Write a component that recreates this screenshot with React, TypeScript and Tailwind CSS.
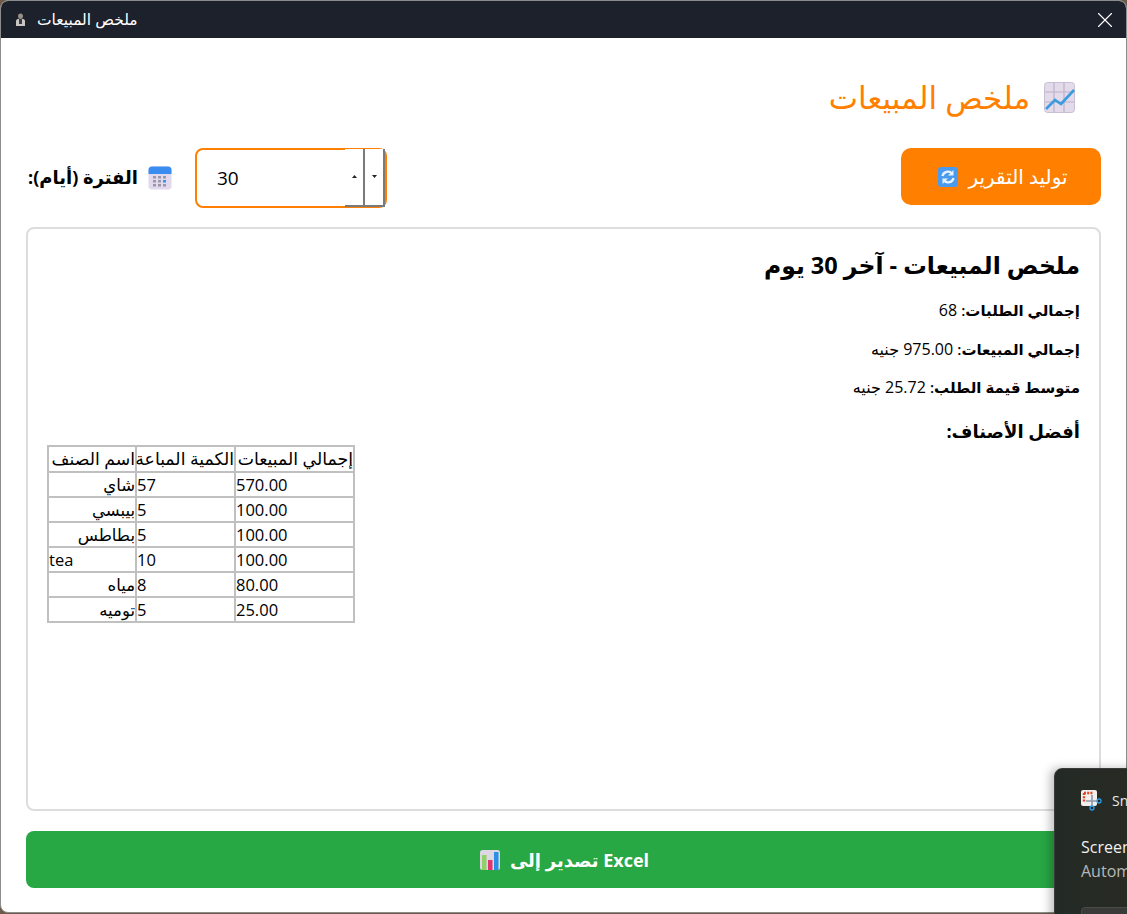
import { X } from "lucide-react";

const rows = [
  ["شاي", "57", "570.00"],
  ["بيبسي", "5", "100.00"],
  ["بطاطس", "5", "100.00"],
  ["tea", "10", "100.00"],
  ["مياه", "8", "80.00"],
  ["توميه", "5", "25.00"],
];

function ChartEmoji() {
  return (
    <svg width="31" height="31" viewBox="0 0 31 31" aria-hidden>
      <rect x="0.5" y="0.5" width="30" height="30" rx="3" fill="#e3dbe9" stroke="#c9bfd4" />
      <path d="M10 1v29M20 1v29M1 10h29M1 20h29" stroke="#bdb1c9" strokeWidth="1.2" />
      <path d="M2 27l9-9 6 4 13-14" fill="none" stroke="#3b9be0" strokeWidth="2.6" />
    </svg>
  );
}

function CalendarEmoji() {
  return (
    <svg width="24" height="24" viewBox="0 0 24 24" aria-hidden>
      <rect x="0.5" y="0.5" width="23" height="23" rx="3.5" fill="#e2d9ee" />
      <path d="M0.5 8V4A3.5 3.5 0 0 1 4 .5h16A3.5 3.5 0 0 1 23.500 4v4z" fill="#3b8cf0" />
      <g fill="#9a98a8">
        <rect x="5" y="10" width="3" height="2.500" />
        <rect x="10" y="10" width="3" height="2.500" />
        <rect x="15" y="10" width="3" height="2.500" />
        <rect x="5" y="14" width="3" height="2.500" />
        <rect x="10" y="14" width="3" height="2.500" />
        <rect x="5" y="18" width="3" height="2.500" />
        <rect x="10" y="18" width="3" height="2.500" />
        <rect x="15" y="18" width="3" height="2.500" />
      </g>
      <rect x="15" y="14" width="3" height="2.500" fill="#2f95ee" />
    </svg>
  );
}

function RefreshEmoji() {
  return (
    <svg width="20" height="20" viewBox="0 0 20 20" aria-hidden>
      <rect width="20" height="20" rx="3" fill="#4a9bee" />
      <path d="M4.500 9a5.500 5.500 0 0 1 9.500-2.500" fill="none" stroke="#e8f2fc" strokeWidth="2.400" />
      <path d="M15.500 3v5.500h-5.500z" fill="#e8f2fc" />
      <path d="M15.500 11a5.500 5.500 0 0 1-9.500 2.500" fill="none" stroke="#e8f2fc" strokeWidth="2.400" />
      <path d="M4.500 17v-5.500h5.500z" fill="#e8f2fc" />
    </svg>
  );
}

function BarsEmoji() {
  return (
    <svg width="20" height="20" viewBox="0 0 20 20" aria-hidden>
      <rect width="20" height="20" rx="2.500" fill="#ddd6e3" />
      <rect x="2" y="5" width="4.500" height="15" fill="#8fd06a" />
      <rect x="8" y="10" width="4.500" height="10" fill="#e0356f" />
      <rect x="14" y="2" width="4.500" height="18" fill="#2b8fe4" />
    </svg>
  );
}

function AppIcon() {
  return (
    <svg width="11" height="13" viewBox="0 0 11 13" aria-hidden>
      <circle cx="5.500" cy="3" r="2.500" fill="#9a8f86" />
      <path d="M1 13V8q0-2.500 4.500-2.500T10 8v5z" fill="#c9c5c0" />
      <rect x="4" y="6" width="3" height="5" fill="#3a3a44" />
    </svg>
  );
}

function SnipIcon() {
  return (
    <svg width="21" height="21" viewBox="0 0 21 21" aria-hidden>
      <rect x="0" y="0" width="16" height="16" rx="2" fill="#f1eeee" />
      <path d="M3 3h9M3 3v9" fill="none" stroke="#e2451f" strokeWidth="2.400" strokeDasharray="2 1.200" />
      <path d="M11 5v12M5 11h12" stroke="#8d98a5" strokeWidth="1.600" />
      <circle cx="18" cy="11" r="2" fill="none" stroke="#2a9be8" strokeWidth="1.300" />
      <circle cx="11" cy="18" r="2" fill="none" stroke="#2a9be8" strokeWidth="1.300" />
    </svg>
  );
}

function Arrow({ up }: { up?: boolean }) {
  return (
    <svg width="5" height="3" viewBox="0 0 5 3" aria-hidden>
      <path d={up ? "M2.500 0L5 3H0z" : "M0 0h5L2.500 3z"} fill="#222" />
    </svg>
  );
}

export default function App() {
  return (
    <div className="relative h-[914px] w-[1127px] overflow-hidden bg-[#6d5a48] font-['Open_Sans','DejaVu_Sans',sans-serif] text-black">
      <div className="h-[913px] overflow-hidden rounded-lg border border-[#8c8c8c] bg-white">
        <div className="flex h-[37px] items-center justify-between bg-[#1d212b] pl-[14px] pr-[8px] text-white">
          <div className="flex items-center gap-[11px]">
            <AppIcon />
            <span className="text-[15.5px]">ملخص المبيعات</span>
          </div>
          <X size={26} strokeWidth={1} />
        </div>

        <div className="flex h-[875px] flex-col px-[25px] pb-[24px]">
          <div className="flex h-[110px] items-center justify-end gap-[14px] pr-[26px] pt-[8px]">
            <h1 className="text-[31px] font-medium text-[#ff7f00]">ملخص المبيعات</h1>
            <ChartEmoji />
          </div>

          <div className="flex h-[59px] items-center justify-between">
            <div className="flex items-center">
              <span dir="rtl" className="mr-[10px] w-[112px] whitespace-nowrap text-[18px] font-bold">
                الفترة (أيام):
              </span>
              <CalendarEmoji />
              <div className="ml-[23px] flex h-[60px] w-[192px] rounded-lg border-2 border-[#ff7f00] pl-[20px] text-[19px]">
                <span className="flex flex-1 items-center pt-[2px]">30</span>
                <div className="-my-[1px] flex">
                  <div className="flex w-[20px] items-center justify-center border-b-2 border-r-2 border-[#7a7a7a] bg-white">
                    <Arrow up />
                  </div>
                  <div className="flex w-[20px] items-center justify-center border-b-2 border-r-2 border-[#7a7a7a] bg-white">
                    <Arrow />
                  </div>
                </div>
              </div>
            </div>
            <button className="flex h-[57px] w-[200px] items-center justify-center gap-[10px] self-start rounded-[10px] bg-[#ff7f00] pl-[4px] text-[20px] font-medium text-white">
              <RefreshEmoji />
              <span>توليد التقرير</span>
            </button>
          </div>

          <div className="mt-[20px] flex h-[584px] flex-col rounded-lg border-2 border-[#dddddd] px-[19px] pt-[18px]">
            <div dir="rtl">
              <h2 className="text-[23.5px] font-bold leading-[36px]">ملخص المبيعات - آخر 30 يوم</h2>
              <p className="mt-[16px] text-[16px] leading-[22px]">
                <b className="text-[15px] font-semibold">إجمالي الطلبات:</b> 68
              </p>
              <p className="mt-[17px] text-[16px] leading-[22px]">
                <b className="text-[15px] font-semibold">إجمالي المبيعات:</b> 975.00 جنيه
              </p>
              <p className="mt-[16px] text-[16px] leading-[22px]">
                <b className="text-[15px] font-semibold">متوسط قيمة الطلب:</b> 25.72 جنيه
              </p>
              <h3 className="mt-[23px] text-[18px] font-bold leading-[20px]">أفضل الأصناف:</h3>
            </div>
            <table className="mt-[4px] w-[306px] table-fixed border-collapse text-[16.5px] leading-[22px]">
              <colgroup>
                <col className="w-[88px]" />
                <col className="w-[99px]" />
                <col className="w-[119px]" />
              </colgroup>
              <thead>
                <tr className="h-[26px]">
                  {["اسم الصنف", "الكمية المباعة", "إجمالي المبيعات"].map((h) => (
                    <th key={h} dir="rtl" className="whitespace-nowrap border-2 border-[#c0c0c0] px-0 text-start text-[17.300px] font-normal">
                      {h}
                    </th>
                  ))}
                </tr>
              </thead>
              <tbody>
                {rows.map((row) => (
                  <tr key={row[0]} className="h-[25px]">
                    {row.map((cell, i) => (
                      <td key={i} dir="auto" className="border-2 border-[#c0c0c0] px-0 text-start">
                        {cell}
                      </td>
                    ))}
                  </tr>
                ))}
              </tbody>
            </table>
          </div>

          <button className="-mr-[2px] mt-[20px] flex h-[57px] items-center justify-center gap-[10px] rounded-lg bg-[#28a745] pt-[1px] text-[18px] font-bold text-white">
            <BarsEmoji />
            <span>تصدير إلى Excel</span>
          </button>
        </div>
      </div>

      <div className="absolute left-[1054px] top-[768px] h-[160px] w-[360px] rounded-tl-lg border border-[#3a3a3a] bg-gradient-to-r from-[#232a25] to-[#3a2c1e] pl-[26px] pt-[21px] text-[16px] shadow-[-4px_0_10px_rgba(0,0,0,0.25)]">
        <div className="flex items-center gap-[10px] text-[14px] text-[#e8e8e8]">
          <SnipIcon />
          <span>Snipping Tool</span>
        </div>
        <p className="mt-[24px] leading-[24px] text-[#f0f0f0]">Screenshot copied to clipboard</p>
        <p className="leading-[24px] text-[#b8b8b8]">Automatically saved to screenshots folder</p>
        <div className="mt-[24px] h-[20px] rounded border border-[#4a4a4a] bg-[#3a3a38]" />
      </div>
    </div>
  );
}
